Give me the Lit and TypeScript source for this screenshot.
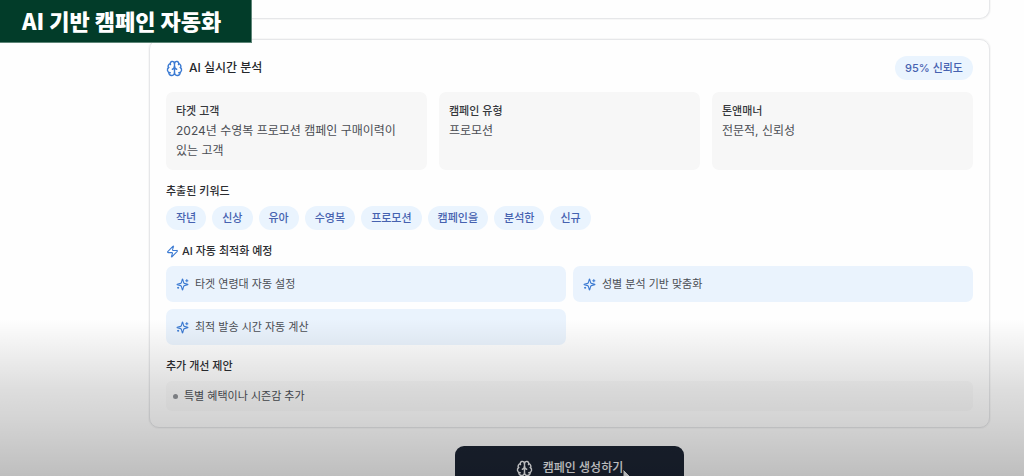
import { LitElement, html, css, svg } from "lit";
import { customElement } from "lit/decorators.js";

const icons = {
  brain: svg`<path d="M12 18V5"/><path d="M15 13a4.17 4.17 0 0 1-3-4 4.17 4.17 0 0 1-3 4"/><path d="M17.598 6.5A3 3 0 1 0 12 5a3 3 0 1 0-5.598 1.5"/><path d="M17.997 5.125a4 4 0 0 1 2.526 5.77"/><path d="M18 18a4 4 0 0 0 2-7.464"/><path d="M19.967 17.483A4 4 0 1 1 12 18a4 4 0 1 1-7.967-.517"/><path d="M6 18a4 4 0 0 1-2-7.464"/><path d="M6.003 5.125a4 4 0 0 0-2.526 5.77"/>`,
  zap: svg`<path d="M4 14a1 1 0 0 1-.78-1.63l9.9-10.2a.5.5 0 0 1 .86.46l-1.92 6.02A1 1 0 0 0 13 10h7a1 1 0 0 1 .78 1.63l-9.9 10.2a.5.5 0 0 1-.86-.46l1.92-6.02A1 1 0 0 0 11 14z"/>`,
  sparkles: svg`<path d="M9.937 15.5A2 2 0 0 0 8.5 14.063l-6.135-1.582a.5.5 0 0 1 0-.962L8.5 9.936A2 2 0 0 0 9.937 8.5l1.582-6.135a.5.5 0 0 1 .963 0L14.063 8.5A2 2 0 0 0 15.5 9.937l6.135 1.581a.5.5 0 0 1 0 .964L15.5 14.063a2 2 0 0 0-1.437 1.437l-1.582 6.135a.5.5 0 0 1-.963 0z"/><path d="M20 3v4"/><path d="M22 5h-4"/><path d="M4 17v2"/><path d="M5 18H3"/>`,
};

const icon = (name: keyof typeof icons, cls: string) =>
  html`<svg class="icon ${cls}" viewBox="0 0 24 24" aria-hidden="true">${icons[name]}</svg>`;

@customElement("app-root")
export class AppRoot extends LitElement {
  static styles = css`
    :host {
      display: block;
      position: relative;
      height: 100vh;
      overflow: hidden;
      background: #fefefe;
      color: #4b4e54;
      font-family: Inter, "Noto Sans CJK KR", sans-serif;
      font-size: 11px;
      line-height: 18px;
      word-break: keep-all;
    }
    * {
      box-sizing: border-box;
    }
    h1, h2, h3, p, ul, dl, dt, dd {
      margin: 0;
      padding: 0;
      font-weight: inherit;
      font-size: inherit;
    }
    ul {
      list-style: none;
    }
    .banner {
      position: absolute;
      top: 0;
      left: 0;
      z-index: 2;
      padding: 0 30px 1px 22px;
      background: #023c29;
      border: solid #5d8577;
      border-width: 0 1px 1px 0;
      color: #fff;
      font: 900 22px/41px "Noto Sans CJK KR", sans-serif;
    }
    .scrim {
      position: absolute;
      inset: auto 0 0;
      height: 33%;
      z-index: 1;
      pointer-events: none;
      background: linear-gradient(rgba(0, 0, 0, 0), rgba(0, 0, 0, 0.13) 45%, rgba(0, 0, 0, 0.17) 65%, rgba(0, 0, 0, 0.25));
    }
    .page {
      display: flex;
      flex-direction: column;
      gap: 18px;
      padding: 0 34px 0 149px;
    }
    .card {
      border: 1px solid #e6e7e9;
      border-radius: 10px;
      background: #fefefe;
      box-shadow: 0 0 1px 1px rgba(0, 0, 0, 0.03);
    }
    .prompt {
      margin-bottom: 2px;
      padding-top: 18px;
      border-top: 0;
      border-radius: 0 0 10px 10px;
    }
    .analysis {
      display: flex;
      flex-direction: column;
      gap: 12px;
      padding: 16px;
    }
    .head {
      display: flex;
      align-items: center;
      justify-content: space-between;
    }
    .title {
      display: flex;
      align-items: center;
      gap: 6px;
      font-size: 12px;
      font-weight: 500;
      color: #25272b;
    }
    .pill {
      padding: 0 10px;
      border-radius: 12px;
      background: #eaf4fe;
      color: #4662b0;
      font-weight: 500;
      line-height: 24px;
    }
    .facts {
      display: grid;
      grid-template-columns: repeat(3, 1fr);
      gap: 12px;
    }
    .fact {
      padding: 9px 10px;
      border-radius: 7px;
      background: #f7f7f7;
      line-height: 20px;
    }
    .fact dt {
      font-weight: 500;
      color: #36383c;
    }
    .fact dd {
      font-size: 12px;
    }
    .group {
      display: flex;
      flex-direction: column;
      gap: 6px;
    }
    .label {
      display: flex;
      align-items: center;
      gap: 3px;
      font-weight: 500;
      color: #2b2d31;
    }
    .pills {
      display: flex;
      flex-wrap: wrap;
      gap: 6px;
    }
    .options {
      display: grid;
      grid-template-columns: repeat(2, 1fr);
      gap: 7px;
    }
    .option {
      display: flex;
      align-items: center;
      gap: 6px;
      padding: 9px 10px;
      border-radius: 7px;
      background: #eaf3fd;
    }
    .tip {
      display: flex;
      align-items: center;
      gap: 6px;
      padding: 6px 7px;
      border-radius: 6px;
      background: #f9f9f9;
    }
    .dot {
      width: 5px;
      height: 5px;
      border-radius: 50%;
      background: #8e9196;
    }
    .icon {
      flex: none;
      fill: none;
      stroke: #3b7ad2;
      stroke-width: 2;
      stroke-linecap: round;
      stroke-linejoin: round;
    }
    .large {
      width: 17px;
      height: 17px;
    }
    .small {
      width: 13px;
      height: 13px;
    }
    .create {
      position: relative;
      align-self: center;
      display: flex;
      align-items: center;
      gap: 10px;
      padding: 13px 61px;
      border: 0;
      border-radius: 9px;
      background: #1c2433;
      color: #f4f5f7;
      font: 500 12px/18px Inter, "Noto Sans CJK KR", sans-serif;
    }
    .create .icon {
      stroke: #f4f5f7;
    }
    .pointer {
      position: absolute;
      top: 22px;
      left: 167px;
      width: 12px;
      height: 18px;
      fill: #eceef0;
      stroke: #1a2230;
    }
  `;

  facts = [
    ["타겟 고객", "2024년 수영복 프로모션 캠페인 구매이력이 있는 고객"],
    ["캠페인 유형", "프로모션"],
    ["톤앤매너", "전문적, 신뢰성"],
  ];
  keywords = ["작년", "신상", "유아", "수영복", "프로모션", "캠페인을", "분석한", "신규"];
  options = ["타겟 연령대 자동 설정", "성별 분석 기반 맞춤화", "최적 발송 시간 자동 계산"];
  tips = ["특별 혜택이나 시즌감 추가"];

  render() {
    return html`
      <h1 class="banner">AI 기반 캠페인 자동화</h1>
      <main class="page" lang="ko">
        <section class="card prompt"></section>
        <section class="card analysis">
          <header class="head">
            <h2 class="title">${icon("brain", "large")}AI 실시간 분석</h2>
            <span class="pill">95% 신뢰도</span>
          </header>
          <dl class="facts">
            ${this.facts.map(([k, v]) => html`<div class="fact"><dt>${k}</dt><dd>${v}</dd></div>`)}
          </dl>
          <section class="group">
            <h3 class="label">추출된 키워드</h3>
            <ul class="pills">${this.keywords.map((k) => html`<li class="pill">${k}</li>`)}</ul>
          </section>
          <section class="group">
            <h3 class="label">${icon("zap", "small")}AI 자동 최적화 예정</h3>
            <ul class="options">
              ${this.options.map((o) => html`<li class="option">${icon("sparkles", "small")}${o}</li>`)}
            </ul>
          </section>
          <section class="group">
            <h3 class="label">추가 개선 제안</h3>
            <ul>${this.tips.map((t) => html`<li class="tip"><span class="dot"></span>${t}</li>`)}</ul>
          </section>
        </section>
        <button class="create" type="button">
          ${icon("brain", "large")}캠페인 생성하기
          <svg class="pointer" viewBox="0 0 12 18" aria-hidden="true">
            <path d="M1 1v14l3-3 2 5 3-1-2-5h4z"/>
          </svg>
        </button>
      </main>
      <div class="scrim"></div>
    `;
  }
}
